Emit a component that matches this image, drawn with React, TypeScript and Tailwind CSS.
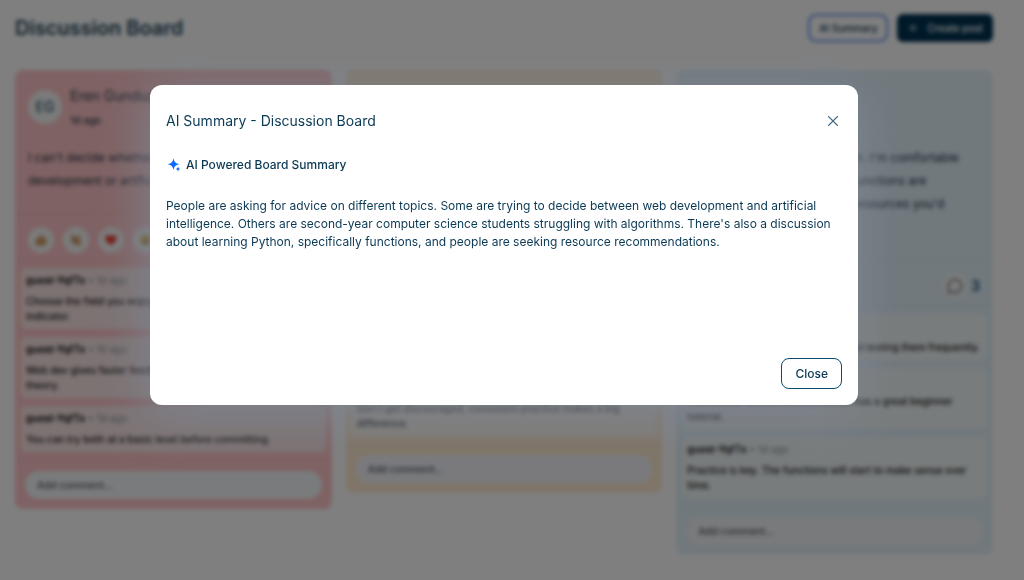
import * as React from "react"
import { MessageCircle, Plus, X } from "lucide-react"

type Comment = { lines: string[] }

type Post = {
    author: string
    initials: string
    body: string[]
    comments: Comment[]
    cardClass: string
    commentClass: string
    inputClass: string
}

const posts: Post[] = [
    {
        author: "Eren Gunduz",
        initials: "EG",
        body: ["I can't decide whether to focus on web", "development or artificial intelligence."],
        comments: [
            { lines: ["Choose the field you enjoy, it is the best", "indicator."] },
            { lines: ["Web dev gives faster feedback, AI needs more", "theory."] },
            { lines: ["You can try both at a basic level before committing."] },
        ],
        cardClass: "bg-[#ffc5c7]",
        commentClass: "bg-[#fbe6e6]",
        inputClass: "bg-[#f4f7f9]",
    },
    {
        author: "Alex Moore",
        initials: "AM",
        body: ["I'm a second-year computer science", "student and I'm struggling with", "algorithms."],
        comments: [
            { lines: ["Start with the basics and solve a few", "small problems every day.", "It gets easier."] },
            { lines: ["Don't get discouraged, consistent practice makes a big", "difference."] },
        ],
        cardClass: "bg-[#ffebd0]",
        commentClass: "bg-[#fdf6ea]",
        inputClass: "bg-[#f4f5fa]",
    },
    {
        author: "Sam Carter",
        initials: "SC",
        body: ["I am currently studying Python. I'm comfortable", "with variables and loops but functions are", "confusing me. Are there any resources you'd", "recommend?"],
        comments: [
            { lines: ["Try writing some small functions and testing them frequently."] },
            { lines: ["The official Python documentation has a great beginner", "tutorial."] },
            { lines: ["Practice is key. The functions will start to make sense over", "time."] },
        ],
        cardClass: "bg-[#e2f2fb]",
        commentClass: "bg-[#f1f8f8]",
        inputClass: "bg-[#f2f5f6]",
    },
]

function ThumbIcon() {
    return (
        <svg viewBox="0 0 16 16" className="size-3.5">
            <path d="M2 7h3l3-5c2 0 2 1.500 1.500 4H13c1.500 0 1.500 2 .6 2.300.8.8.4 1.900-.4 2.100.5.900 0 1.700-.7 1.900.2.900-.4 1.700-1.500 1.700H6l-4-1z" fill="#d69a5c" stroke="#a8733f" strokeWidth=".5" />
        </svg>
    )
}

function ClapIcon() {
    return (
        <svg viewBox="0 0 16 16" className="size-3.5">
            <path d="M2 3l2-1 4 4 4-4 1 1-1.500 4 2.500 4-1 2.500-3 .500L4 11 2.500 9.500 4 8z" fill="#d9a874" stroke="#a8733f" strokeWidth=".5" />
            <path d="M4 4l6 7M4 8l4 4" stroke="#96683a" strokeWidth=".8" />
        </svg>
    )
}

function HeartIcon() {
    return (
        <svg viewBox="0 0 16 16" className="size-3.5">
            <path d="M8 14C3 10.500 1.500 8 1.500 5.500 1.500 2 6 1 8 4.200 10 1 14.500 2 14.500 5.500 14.500 8 13 10.500 8 14z" fill="#ee3524" />
        </svg>
    )
}

function LaughIcon() {
    return (
        <svg viewBox="0 0 16 16" className="size-3.5">
            <circle cx="8" cy="8" r="6.500" fill="#f2c040" />
            <path d="M4 8.500h8c0 5-8 5-8 0z" fill="#7a5424" />
            <path d="M4.500 6.500l1.500-1 1 1M9 6.500l1-1 1.500 1" fill="none" stroke="#7a5424" strokeWidth=".8" />
        </svg>
    )
}

function SparkleIcon() {
    return (
        <svg viewBox="0 0 16 16" className="size-4 shrink-0" fill="#0f6bff">
            <path d="M7.500 1.300C8.300 5.200 9.500 6.400 13.400 7.200 9.500 8 8.300 9.200 7.500 13.100 6.700 9.200 5.500 8 1.600 7.200 5.500 6.400 6.700 5.200 7.500 1.300z" />
            <path d="M12 9.500c.4 1.700.9 2.200 2.600 2.600-1.700.4-2.200.9-2.600 2.600-.4-1.700-.9-2.200-2.600-2.600 1.700-.4 2.200-.9 2.600-2.600z" />
        </svg>
    )
}

const reactions = [
    { name: "Like", icon: <ThumbIcon /> },
    { name: "Clap", icon: <ClapIcon /> },
    { name: "Love", icon: <HeartIcon /> },
    { name: "Laugh", icon: <LaughIcon /> },
]

function PostCard({ post }: { post: Post }) {
    return (
        <article className={`rounded-lg ${post.cardClass}`}>
            <header className="flex gap-2 px-[13px] pt-4">
                <div className="mt-1 flex size-[34px] shrink-0 items-center justify-center rounded-full bg-[#f6f6f6] text-sm font-medium text-[#33566b]">{post.initials}</div>
                <div>
                    <h2 className="text-sm leading-5 text-[#2b3f50]">{post.author}</h2>
                    <p className="mt-1 text-[10px] leading-5 font-medium text-[#2b3f50]">1d ago</p>
                </div>
            </header>
            <p className="px-[13px] pt-4 pb-[21px] text-xs leading-[23px] text-[#1f3344]">
                {post.body.map((line) => (
                    <span key={line} className="block">{line}</span>
                ))}
            </p>
            <div className="flex h-[47px] items-center gap-[9px] border-y border-black/5 px-[13px] pt-[7px]">
                {reactions.map((reaction) => (
                    <button key={reaction.name} aria-label={reaction.name} className="flex size-[26px] items-center justify-center rounded-full bg-[#f6f6f6]">
                        {reaction.icon}
                    </button>
                ))}
                <div className="ml-auto flex items-center gap-1">
                    <button aria-label="Comments" className="flex size-6 items-center justify-center rounded-full bg-[#fbf6f2]">
                        <MessageCircle className="size-4 text-[#46647a]" />
                    </button>
                    <span className="text-sm font-semibold text-[#164a70]">{post.comments.length}</span>
                </div>
            </div>
            <ul className="flex flex-col gap-2 px-1.5 py-2">
                {post.comments.map((comment) => (
                    <li key={comment.lines[0]} className={`rounded-md px-[5px] pt-1 pb-[5px] ${post.commentClass}`}>
                        <p className="pb-1.5 text-[10px] leading-4 text-[#8a9299]">
                            <strong className="font-semibold text-black">guest-YqfTx</strong> • 1d ago
                        </p>
                        <p className="text-[10px] leading-[15px] font-medium text-[#1c1c1c]">
                            {comment.lines.map((line) => (
                                <span key={line} className="block whitespace-nowrap">{line}</span>
                            ))}
                        </p>
                    </li>
                ))}
            </ul>
            <div className="border-t border-black/5 p-2.5">
                <input
                    type="text"
                    aria-label={`Comment on the post by ${post.author}`}
                    placeholder="Add comment..."
                    className={`block h-7 w-full rounded-full px-3 text-[10px] font-medium placeholder:text-[#5a646c] ${post.inputClass}`}
                />
            </div>
        </article>
    )
}

export default function App() {
    const [open, setOpen] = React.useState(true)

    return (
        <div className="min-h-screen bg-white font-['Inter',sans-serif] text-[#0b3954]">
            <div className="pr-[31px] pb-6 pl-[15px]">
                <header className="flex h-14 items-center justify-between">
                    <h1 className="text-xl font-semibold text-[#1c435a]">Discussion Board</h1>
                    <div className="flex gap-[9px]">
                        <button onClick={() => setOpen(true)} className="h-7 rounded-lg border-2 border-[#6a90f0] px-[9px] text-[10px] font-medium">
                            AI Summary
                        </button>
                        <button className="flex h-7 items-center gap-2 rounded-md bg-[#003352] px-2.5 text-[10px] font-medium text-white">
                            <Plus className="size-3" />
                            Create post
                        </button>
                    </div>
                </header>
                <main className="grid grid-cols-3 items-start gap-3.5 pt-3.5">
                    {posts.map((post) => (
                        <PostCard key={post.author} post={post} />
                    ))}
                </main>
            </div>

            {open && (
                <div className="fixed inset-0 flex items-start justify-center bg-black/50 pt-[85px] pr-4 backdrop-blur-[2px]">
                    <section
                        role="dialog"
                        aria-modal="true"
                        aria-labelledby="summary-title"
                        className="flex min-h-80 w-full max-w-[708px] flex-col rounded-xl bg-white px-4 py-4 shadow-[0_8px_48px_4px_rgba(128,134,146,0.9)]"
                    >
                        <div className="flex h-10 items-center justify-between">
                            <h2 id="summary-title" className="text-sm">AI Summary - Discussion Board</h2>
                            <button aria-label="Close dialog" onClick={() => setOpen(false)} className="text-[#4a6a80]">
                                <X className="size-[18px]" strokeWidth={1.5} />
                            </button>
                        </div>
                        <h3 className="mt-4 flex items-center gap-1 text-xs font-medium">
                            <SparkleIcon />
                            AI Powered Board Summary
                        </h3>
                        <p className="mt-6 text-xs leading-[18px]">
                            People are asking for advice on different topics. Some are trying to decide between web development and artificial intelligence. Others are second-year computer science students struggling with algorithms. There's also a discussion about learning Python, specifically functions, and people are seeking resource recommendations.
                        </p>
                        <div className="mt-auto flex justify-end">
                            <button onClick={() => setOpen(false)} className="h-[31px] rounded-lg border border-[#0b4a6f] px-[13px] text-xs font-medium">
                                Close
                            </button>
                        </div>
                    </section>
                </div>
            )}
        </div>
    )
}
